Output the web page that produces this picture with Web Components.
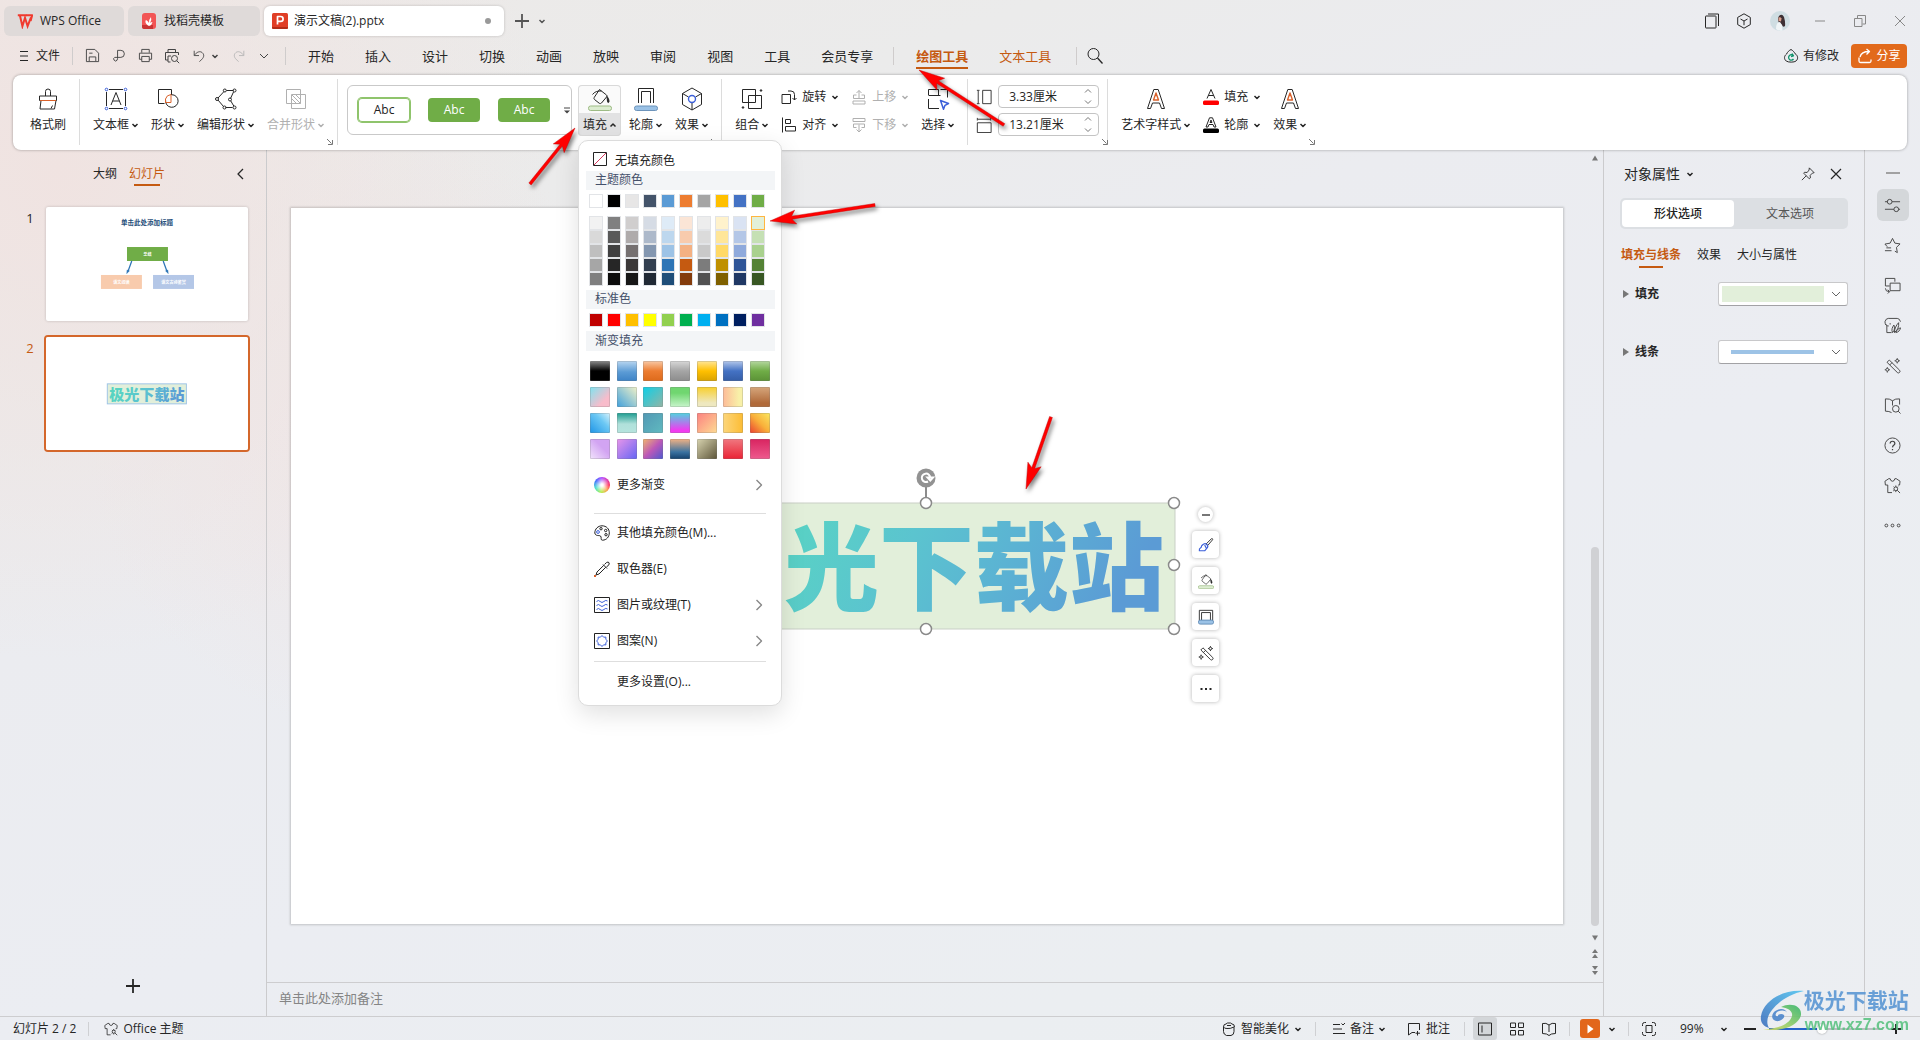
<!DOCTYPE html>
<html lang="zh-CN">
<head>
<meta charset="utf-8">
<title>演示文稿(2).pptx - WPS Office</title>
<style>
  html, body { margin: 0; height: 100%; }
  body {
    font: 12px/16px "Open Sans", "Noto Sans CJK SC", sans-serif;
    color: #262626;
    overflow: hidden;
    background:
      radial-gradient(circle at 3% 16%, #f0e3e1 0, rgba(240,227,225,0) 24%),
      radial-gradient(circle at 20% 42%, #efe6e6 0, rgba(239,230,230,0) 18%),
      linear-gradient(160deg, #ece9e7 0%, #ebebeb 22%, #ebecf0 38%, #ebedf2 60%, #ebeef1 80%, #eceef2 100%);
  }
</style>
</head>
<body>
<wps-app></wps-app>

<script>
const BASE = `
  *, *::before, *::after { box-sizing: border-box; }
  button { font: inherit; color: inherit; background: none; border: 0; margin: 0; padding: 0; display: flex; align-items: center; justify-content: center; }
  a { color: inherit; text-decoration: none; }
  select, input { font: inherit; color: inherit; margin: 0; border-radius: 0; }
  :host([hidden]) { display: none; }
`;
const define = (tag, css, html) => customElements.define(tag, class extends HTMLElement {
  connectedCallback() {
    if (this.shadowRoot) return;
    const t = document.createElement('template');
    t.innerHTML = `<style>${BASE}${css}</style>${typeof html === 'function' ? html(this) : html}`;
    this.attachShadow({ mode: 'open' }).append(t.content.cloneNode(true));
  }
});

/* ---------- icons: [viewBox size, markup] ---------- */
const B = '#3b5fd9', O = '#d9622b';
const ICONS = {
  chev: [8, '<path d="M1.5 3l2.5 2.5L6.5 3" stroke-width="1.5"/>'],
  chevup: [8, '<path d="M1.5 5.5L4 3l2.5 2.5" stroke-width="1.5"/>'],
  spinup: [10, '<path d="M2 6.500l3-3 3 3"/>'],
  spindown: [10, '<path d="M2 3.500l3 3 3-3"/>'],
  chevthin: [12, '<path d="M2 4l4 4 4-4"/>'],
  right: [14, '<path d="M4.5 2l5 5-5 5" stroke="#888" stroke-width="1.4"/>'],
  left: [14, '<path d="M9 2L4 7l5 5" stroke-width="1.3"/>'],
  launch: [8, '<path d="M1 1l4.5 4.5M2 6.5h4.5V2" stroke="#777"/>'],
  more: [10, '<path d="M2 3h6" /><path d="M2 5.5h6L5 8.5z" fill="currentColor" stroke="none"/>'],
  wps: [16, '<path d="M.8 2.2h8.6M3 2.8l2.4 10.4L8 4.8l2.6 8.4L14 4.4" stroke="#f03a2e" stroke-width="2" stroke-linejoin="miter"/><path d="M9 2.2h6.2L13.6 8" stroke="#f03a2e" stroke-width="2"/>'],
  docer: [16, '<rect x="1" y="0" width="14" height="16" rx="3" fill="#f25555" stroke="none"/><path d="M1 12h11v4H3q-2 0-2-2z" fill="#c93434" stroke="none"/><path d="M8 13C4 11 4 8 5 7q2 1 3 3 0-4 2-6 1 3-1 6 1-1 2.500-1-.5 3-3.500 4z" fill="#fff" stroke="none"/>'],
  ppt: [16, '<rect width="16" height="16" rx="1.500" fill="#e03e26" stroke="none"/><path d="M0 14h16v.5q0 1.500-1.500 1.500h-13Q0 16 0 14.500z" fill="#b32d18" stroke="none"/><path d="M5.500 11.500V3.500h3.200a2.300 2.300 0 0 1 0 4.800H5.500" stroke="#fff" stroke-width="1.700"/>'],
  plus: [16, '<path d="M8 1v14M1 8h14" stroke-width="1.800"/>'],
  windows: [16, '<rect x="1.500" y="3" width="10.500" height="12" rx=".5"/><path d="M4 1h10.500v12"/>'],
  cube: [16, '<path d="M8 .8l6.300 3.600v7.200L8 15.200l-6.300-3.600V4.400zM4.500 6L8 8l3.500-2M8 8v4.200"/>'],
  avatar: [20, '<circle cx="10" cy="10" r="10" fill="#cfdde2" stroke="none"/><path d="M9 5q3-3 5 1 1.500 5 1 9-2 2-3-1L9 12Q7 8 9 5z" fill="#3d3034" stroke="none"/><path d="M8.500 6.500q2-1 3 1l-.5 3-2.500-.5z" fill="#dba28f" stroke="none"/><path d="M6 18q0-7 4-7l2 3 .5 5.500q-4 1-6.500-1.500z" fill="#f0f5f7" stroke="none"/>'],
  wmin: [14, '<path d="M2 7h10" stroke="#888"/>'],
  wrestore: [14, '<rect x="1.500" y="4.500" width="7.500" height="8" stroke="#888"/><path d="M4.500 4V1.500h8V10H9.500" stroke="#888"/>'],
  wclose: [14, '<path d="M2 2l10 10M12 2L2 12" stroke="#888"/>'],
  menu: [12, '<path d="M2 1.500h8M2 6h8M2 10.500h8"/>'],
  save: [16, '<path d="M1.500 1.500h9l4 4v9h-13zM4.500 14V9.500h7V14M4.500 5.500H8"/>'],
  pdf: [16, '<path d="M7 11V2.500h3.500a3.700 3.700 0 0 1 0 7.500H4a2 2 0 1 0 2.500 3L7 11"/>'],
  print: [16, '<path d="M4 5V1.500h8V5M4 12H1.500V5.500h13V12H12M4 9h8v5.500H4z"/>'],
  preview: [16, '<path d="M4 4.500v-3h7.500v3M4 12H1.500V4.500h13V7M6.500 14H4V8h3"/><circle cx="10.500" cy="10.500" r="3"/><path d="M12.800 12.800l2.400 2.400"/>'],
  undo: [16, '<path d="M2.500 2v5.500H8M2.800 7.200C5 3.500 9 2 11.500 4c3 2.500 2 5.500 0 7.500l-3 3"/>'],
  redo: [16, '<path d="M13.500 2v5.500H8M13.200 7.200C11 3.500 7 2 4.500 4c-3 2.500-2 5.500 0 7.500l3 3" stroke="#b5b5b5"/>'],
  search: [18, '<circle cx="7.500" cy="7" r="5.500"/><path d="M11.500 11l5 5.500" stroke-width="1.300"/>'],
  cloud: [16, '<path d="M8 1.500c2 1 3.500 3 4.200 4.300C15 7.500 15.500 11 13 13c-1.500 1.500-8 1.500-9.800 0C.8 11 1 8 3.600 6 4.500 4 6 2.500 8 1.500z"/><path d="M10.500 7.800A2.700 2.700 0 1 0 10.500 11M9 5.500l1.500 2.300-2.500.7" stroke="#11936b" stroke-width="1.300"/>'],
  share: [16, '<path d="M2 9.500v3.500q0 1.500 1.500 1.500h9q1.500 0 1.500-1.500v-1.500M3 9c1-4 4-5.500 9-5.500M9.500 1L12.500 3.500 9.500 6.500" stroke-width="1.300"/>'],
  brushbig: [24, '<path d="M9.500 9V4.500a2.500 2.500 0 0 1 5 0V9M3.500 9h17v4.500h-17zM5 13.500L4 22h14.500l1.500-8.500M15 21.500l1.500-3"/><path d="M4 13.500h16" stroke="'+O+'"/>'],
  textbox: [24, '<path d="M5 2.500h14M5 21.500h14M2.500 5v14M21.500 5v14M7 18l5-12.500L17 18M8.700 14h6.600"/><g stroke="'+B+'"><circle cx="2.500" cy="2.500" r="1.300"/><circle cx="21.500" cy="2.500" r="1.300"/><circle cx="2.500" cy="21.500" r="1.300"/><circle cx="21.500" cy="21.500" r="1.300"/></g>'],
  shapes: [24, '<path d="M8.500 16.500H2.500V2.500h13V8"/><path d="M9.600 13a6.300 6.300 0 1 0 6-5.300"/><path d="M9.500 15.500V12q1-4 5.500-4.500v8z" stroke="'+O+'"/>'],
  editshape: [24, '<path d="M12.500 3.500h7M19.500 5l-3 6.500M16.800 14l3 5M18.500 20.500h-7M9.500 19.500L4 13M4 11l6-6.500"/><circle cx="10.800" cy="3.500" r="1.500"/><circle cx="20.500" cy="3.500" r="1.500"/><circle cx="3" cy="12" r="1.500"/><circle cx="16" cy="12.500" r="1.500"/><circle cx="20.500" cy="20.500" r="1.500"/><circle cx="10.500" cy="20.500" r="1.500"/>'],
  merge: [24, '<rect x="2.500" y="2.500" width="14" height="14"/><rect x="7.500" y="7.500" width="14" height="14"/><path d="M8 8l8.500 8.500M8 12l4.500 4.500M12 8l4.500 4.500"/>'],
  bucket: [24, '<path d="M11.500 2.500l7 5.500q1 .8.200 1.800L13.500 16q-1 1-2.200.3L6.500 12.500q-1-1-.2-2.200zM4.500 7.500q3-4 9-3.500"/><path d="M19 9.500c1.200 1.500 2 3 2 5 0 1.300-1.500 1.300-1.500 0z" fill="currentColor"/><rect x=".5" y="19" width="23" height="4.500" rx="2" fill="#dcecd0" stroke="#9dbb85"/>'],
  outline: [24, '<path d="M4.500 16V1.500h15V16M7.500 16V4.500h9V16"/><rect x=".5" y="19" width="23" height="4.500" rx="2" fill="#9bc2e6" stroke="#6d94bb"/>'],
  effect: [24, '<path d="M12 1l9.500 5.500v11L12 23l-9.500-5.500v-11zM2.500 6.500l6 3.500M21.500 6.500l-6 3.500M12 16v7"/><circle cx="12" cy="12" r="3.500" stroke="'+B+'" stroke-width="1.400"/>'],
  group: [24, '<path d="M2.500 2.500h13v13h-13zM8.500 8.500h13v13h-13z"/><circle cx="21" cy="3.500" r=".8" fill="currentColor"/><circle cx="3" cy="20.500" r=".8" fill="currentColor"/>'],
  rotate: [16, '<path d="M1 5.500h8.500v9H1zM7 2h3q3.500 0 3.500 3.500V11M11.500 9l2 2 2-2"/>'],
  align: [16, '<path d="M1.500 .5v15M4.500 2.500h5v4h-5zM4.500 9.500h10v4.500h-10z"/>'],
  up: [16, '<path d="M8 9V1.500M5.500 4L8 1.500 10.500 4M5.500 6H2.500v3.500h11V6h-3M2 12h12v3H2z"/>'],
  down: [16, '<path d="M2 1.500h12v3H2zM5.500 10.500H2.500V7h11v3.500h-3M8 7.500V15M5.500 12.500L8 15l2.500-2.500"/>'],
  select: [24, '<path d="M2.500 8V2.500h10v6M14.500 2.500h7v8M2.500 8.500h12M2.500 12v9.500H13"/><path d="M14.500 13.500l8 3-3.500 1.800-1.500 4z" stroke="'+B+'" stroke-width="1.500"/>'],
  height: [18, '<path d="M2.500 2v14M1 1.500h3M1 16.500h3M7.500 1.500h9.500v15H7.500z"/>'],
  width: [18, '<path d="M2 2.500h14M1.500 1v3M16.500 1v3M1.500 6.500h15.500v11H1.500z"/>'],
  art: [24, '<path d="M3.500 21.500L9.800 2.500h4.400l6.300 19h-3L15.500 16h-7l-2 5.500z"/><path d="M9.500 13L12 6l2.500 7z" stroke="'+O+'" stroke-width="1.400"/>'],
  artfill: [16, '<path d="M4 9.500L8 .5l4 9M5.300 6.500h5.400"/><rect x="0" y="11.500" width="16" height="4.500" rx="1.500" fill="#f00" stroke="none"/>'],
  artline: [16, '<path d="M3 10L6.500 .8h3L13 10h-2l-1-2.500H6L5 10zM7 5.500l1-2.500 1 2.500z"/><rect x="0" y="11.500" width="16" height="4.500" rx="1.500" fill="#000" stroke="none"/>'],
  pin: [16, '<path d="M9.500 1l5.500 5.500-2 .5-2.500 2.500.2 3L9.500 13.500 3 7l1-1 3 .3L9.200 3.500zM6 10l-5 5"/>'],
  close: [14, '<path d="M2 2l10 10M12 2L2 12" stroke-width="1.200"/>'],
  dash: [16, '<path d="M1 8h14" stroke="#999" stroke-width="1.800"/>'],
  sliders: [18, '<path d="M1 5h3M8.500 5H17M1 13h9.500M15.500 13H17"/><circle cx="6" cy="5" r="2.500"/><circle cx="13" cy="13" r="2.500"/>'],
  star: [18, '<path d="M3.500 10.300L1 7.500l5.500-1L9 1.500l2.500 5 5.500.8-3.800 3.700.9 5.500-2.600-1.500M2.500 11.500h5M1 14.500h7"/>'],
  swap: [18, '<path d="M6 9.500H1.500v-8h10V5M6.500 6.500h10.500v8H6.500zM1.500 12q0 3.500 4 3.500M4 13.500l2 2-2 2"/>'],
  leaf: [18, '<path d="M3 9v7.500h5M2.500 8.500Q1 7.500 1 5q1-3.500 3.500-3.500h9.500q2.500 0 3.500 3.500M6.500 8v-1.500M5 9.500c-1.500 0-3-.5-3.500-2"/><path d="M9 16.500c-1.500-3 0-6 1.500-8 1 3 1 5.500-1.500 8zM11 16.500c0-4 2-8 4.500-10.500.5 4-1 8-4.500 10.500zM12.500 16.500c1-3 3-4.500 5-5-.5 2.500-2 4.500-5 5z"/>'],
  wand: [18, '<path d="M3.200 5.600L5.600 3.200 16.500 14a1.700 1.700 0 0 1-2.400 2.400L3.200 5.600zM6 8.500L8.500 6"/><circle cx="14" cy="4" r="1.500"/><circle cx="3.500" cy="13.500" r="1.500"/><path d="M14 1.200v1.300M16.800 4h-1.300M14 6.800V5.500M3.500 16.500v-1.500M.8 13.500H2M3.500 10.800V12M12.500 4h-1.300M5 13.500h1.300"/>'],
  book: [18, '<path d="M9 4Q6 1.500 1.500 2v13q4 0 6.500 1.500M9 4q3-2.500 7.500-2V8M9 4v5"/><circle cx="12.500" cy="12.500" r="3.500"/><path d="M15 15l2.500 2.500"/>'],
  help: [18, '<circle cx="9" cy="9" r="8"/><path d="M6.500 7q0-2.500 2.500-2.500T11.500 7q0 1-1.200 1.800T9 11M9 12.800v1.200" stroke-width="1.300"/>'],
  shirt: [18, '<path d="M8.500 16.500H4V8.500H1.500L1 4.500 5 1.800h1.500q.5 2.700 2.500 2.700t2.500-2.700H13l4 2.700-.5 4H15"/><circle cx="12.500" cy="12.500" r="2"/><path d="M12.500 9v1.500M10.200 10.200l1 1M14.800 10.200l-1 1M9.800 14.800l1.200-1M14 14l3 3M12.500 14.500V16"/>'],
  dots3: [18, '<circle cx="2.500" cy="9" r="1.500"/><circle cx="9" cy="9" r="1.500"/><circle cx="15.500" cy="9" r="1.500"/>'],
  dots: [16, '<g fill="currentColor" stroke="none"><rect x="2.500" y="7" width="2" height="2"/><rect x="7" y="7" width="2" height="2"/><rect x="11.500" y="7" width="2" height="2"/></g>'],
  nofill: [14, '<rect x=".5" y=".5" width="13" height="13"/><path d="M1 13L13 1" stroke="#d8365d"/>'],
  palette: [16, '<path d="M8 .8c4.500 0 7.300 3.200 7.300 7 0 4-2.800 7.400-6.800 7.400-2.500 0-.5-3-2-4.200-1.500-1-5 .5-5.700-3C.8 4 4 .8 8 .8z"/><circle cx="4" cy="7" r="1.400" stroke="'+B+'"/><circle cx="7" cy="3.700" r="1.200"/><circle cx="11.700" cy="5.500" r="1.200"/><circle cx="12" cy="9.700" r="1.200"/>'],
  picker: [16, '<path d="M9 3.500l4 4M9.800 4.300L3 11l-1 3 3-1 6.800-6.800M10.500 3.500q2-2.500 3.500-2.500 1.500.5 1.200 2-.7 2-2.700 2.800"/><rect x="0" y="14" width="2" height="2" fill="'+O+'" stroke="none"/>'],
  texture: [16, '<rect x=".5" y=".5" width="15" height="15"/><path d="M2.500 4.500q2-2 3.700 0t3.700 0 3.600-.5M2.500 8.500q2-2 3.700 0t3.700 0 3.600-.5M2.500 12.500q2-2 3.700 0t3.700 0 3.600-.5" stroke="'+B+'"/>'],
  pattern: [16, '<rect x=".5" y=".5" width="15" height="15"/><path d="M8 2.500l1.600 1.700 2.300-.1-.1 2.300L13.500 8l-1.700 1.600.1 2.300-2.300-.1L8 13.500l-1.600-1.700-2.300.1.1-2.300L2.500 8l1.700-1.600-.1-2.300 2.300.1z" stroke="'+B+'"/>'],
  brush: [18, '<path d="M9 8L15 2q1.500-.8 1.500 1L11 9.500z"/><path d="M5 9q2.500-2.500 4.500-1 2.500 2 1 4l-3 3.500H1.500Q1 13 3 12q1-.5 1-2zM7.500 9l2 4" stroke="'+B+'" stroke-width="1.300"/>'],
  frame: [18, '<path d="M1.500 13V1.500h15V13M4 13V4h10v9"/><rect x=".5" y="12.500" width="17" height="4.500" rx="2" fill="#9bc2e6" stroke="#5d88b3"/>'],
  beauty: [14, '<path d="M1.500 5v4.500q0 3 3 4h4.500q3-.5 3-4V5q-4 2-7 1.500Q2 6.500 1.500 5q0-3 2.500-3l1.500-1h3l1.500 1q2.500 0 2.500 3M5 3.500h4"/>'],
  note: [14, '<path d="M1 2.500h7M9.500 1.500l1.500 1.500L13 1M1 7h9M1 11.500h12"/>'],
  comment: [14, '<path d="M8 10.500H5L1.500 13V1.500h11V8M10.500 9v4.500M8.500 11.200h4.500"/>'],
  normal: [16, '<rect x="1.500" y="2" width="13" height="12"/><path d="M5 4.500v7"/>'],
  grid: [16, '<path d="M1.500 2h5v4.500h-5zM9.500 2h5v4.500h-5zM1.500 9.500h5V14h-5zM9.500 9.500h5V14h-5z"/>'],
  read: [16, '<path d="M8 4Q5 1.500 1.500 2.500v10l4 .5L8 14.500l2.500-1.500 4-.5v-10Q11 1.500 8 4v7"/>'],
  play: [16, '<path d="M5.500 3.500l6 4.500-6 4.500z" fill="#fff" stroke="none"/>'],
  fit: [16, '<path d="M1.500 5V3.500q0-2 2-2H5M11 1.500h1.500q2 0 2 2V5M14.500 11v1.500q0 2-2 2H11M5 14.500H3.500q-2 0-2-2V11M5 4.500h6v7H5z"/>'],
  minus: [14, '<path d="M1 7h12" stroke="#222" stroke-width="2"/>'],
  plusbold: [14, '<path d="M7 2v10M2 7h10" stroke="#222" stroke-width="2"/>'],
  bar: [12, '<path d="M2 6h8" stroke="#777" stroke-width="2"/>'],
};
define('wps-icon', `
  :host { display: inline-flex; flex: none; }
  svg { display: block; }
`, el => {
  const [n, m] = ICONS[el.getAttribute('name')];
  const s = el.getAttribute('size') || n;
  return `<svg width="${s}" height="${s}" viewBox="0 0 ${n} ${n}" fill="none" stroke="currentColor" stroke-linejoin="round" aria-hidden="true">${m}</svg>`;
});

/* ---------- title bar ---------- */
define('title-tab', `
  :host { display: block; height: 30px; }
  button { width: 100%; height: 30px; padding: 0 13px; gap: 7px; justify-content: flex-start; border-radius: 6px; background: #dfdad9; }
  :host([active]) button { background: #fff; box-shadow: 0 0 3px rgba(0,0,0,.2); padding: 0 8px; gap: 6px; }
  .dot { margin-left: auto; margin-right: 5px; width: 6px; height: 6px; border-radius: 3px; background: #999; }
`, el => `<button role="tab"><wps-icon name="${el.getAttribute('icon')}"></wps-icon><slot></slot>${el.hasAttribute('active') ? '<span class="dot"></span>' : ''}</button>`);

define('title-bar', `
  :host { display: flex; box-sizing: border-box; align-items: center; height: 40px; padding: 2px 0 0 4px; gap: 4px; }
  .add { margin-left: 6px; gap: 8px; display: flex; color: #555; }
  .win { margin-left: auto; display: flex; align-items: center; }
  .win button { width: 40px; height: 32px; }
  .win .tight { width: 32px; }
`, `
  <title-tab icon="wps" style="width:120px">WPS Office</title-tab>
  <title-tab icon="docer" style="width:132px">找稻壳模板</title-tab>
  <title-tab icon="ppt" style="width:240px" active>演示文稿(2).pptx</title-tab>
  <div class="add"><button aria-label="新建"><wps-icon name="plus"></wps-icon></button><button aria-label="标签列表"><wps-icon name="chev"></wps-icon></button></div>
  <div class="win">
    <button class="tight" aria-label="工作区"><wps-icon name="windows"></wps-icon></button>
    <button class="tight" aria-label="应用"><wps-icon name="cube"></wps-icon></button>
    <button aria-label="账号"><wps-icon name="avatar"></wps-icon></button>
    <button aria-label="最小化"><wps-icon name="wmin"></wps-icon></button>
    <button aria-label="还原"><wps-icon name="wrestore"></wps-icon></button>
    <button aria-label="关闭"><wps-icon name="wclose"></wps-icon></button>
  </div>
`);

/* ---------- menu row ---------- */
define('menu-tab', `
  :host { display: block; font-size: 13px; }
  button { height: 26px; line-height: 20px; border-bottom: 2px solid transparent; padding-top: 2px; white-space: nowrap; }
  :host([accent]) button { color: #c55a11; }
  :host([active]) button { border-bottom: 2px solid #c55a11; font-weight: 700; }
`, `<button role="tab"><slot></slot></button>`);

define('menu-bar', `
  :host { display: flex; box-sizing: border-box; align-items: center; height: 35px; padding: 0 13px 4px 18px; }
  .file { gap: 6px; height: 24px; }
  i { width: 1px; height: 18px; background: #cfcccc; }
  .quick { display: flex; align-items: center; padding: 0 15px 0 12px; color: #444; }
  .quick button { height: 24px; }
  .tabs { display: flex; align-items: center; gap: 31px; padding: 0 20px 0 22px; }
  .right { margin-left: auto; display: flex; align-items: center; gap: 12px; }
  .state { gap: 4px; height: 24px; }
  .share { width: 56px; height: 24px; gap: 3px; border-radius: 4px; background: #e26a1b; color: #fff; }
  .find { margin-left: 9px; }
`, `
  <button class="file"><wps-icon name="menu"></wps-icon>文件</button><i style="margin-left:12px"></i>
  <div class="quick">
    <button aria-label="保存" style="width:15px"><wps-icon name="save" size="15"></wps-icon></button>
    <button aria-label="输出为PDF" style="width:15px;margin-left:11px"><wps-icon name="pdf" size="15"></wps-icon></button>
    <button aria-label="打印" style="width:16px;margin-left:11px"><wps-icon name="print" size="15"></wps-icon></button>
    <button aria-label="打印预览" style="width:16px;margin-left:11px"><wps-icon name="preview"></wps-icon></button>
    <button aria-label="撤销" style="width:14px;margin-left:12px"><wps-icon name="undo" size="14"></wps-icon></button>
    <button aria-label="撤销列表" style="margin-left:5px"><wps-icon name="chev"></wps-icon></button>
    <button aria-label="恢复" style="width:14px;margin-left:13px"><wps-icon name="redo" size="14"></wps-icon></button>
    <button aria-label="自定义" style="margin-left:12px"><wps-icon name="chevthin"></wps-icon></button>
  </div><i></i>
  <nav class="tabs" role="tablist">
    <menu-tab>开始</menu-tab><menu-tab>插入</menu-tab><menu-tab>设计</menu-tab><menu-tab>切换</menu-tab><menu-tab>动画</menu-tab><menu-tab>放映</menu-tab><menu-tab>审阅</menu-tab><menu-tab>视图</menu-tab><menu-tab>工具</menu-tab><menu-tab>会员专享</menu-tab>
  </nav><i></i>
  <nav class="tabs" role="tablist" style="padding-right:25px"><menu-tab accent active>绘图工具</menu-tab><menu-tab accent>文本工具</menu-tab></nav><i></i>
  <button class="find" aria-label="搜索"><wps-icon name="search"></wps-icon></button>
  <div class="right">
    <button class="state"><wps-icon name="cloud"></wps-icon>有修改</button>
    <button class="share"><wps-icon name="share"></wps-icon>分享</button>
  </div>
`);

/* ---------- ribbon ---------- */
define('tool-button', `
  :host { display: block; position: relative; }
  button { flex-direction: column; height: 51px; white-space: nowrap; }
  .pic { height: 28px; display: flex; align-items: center; }
  .txt { display: flex; align-items: center; gap: 2px; height: 23px; }
  wps-icon[name^="chev"] { margin-right: -1px; }
  :host([row]) button { flex-direction: row; height: 23px; gap: 5px; }
  :host([row]) .pic { height: 23px; }
  :host([row]) .txt { gap: 5px; }
  :host([off]) { color: #b0b0b0; }
  :host([open]) { margin: 0 -5px; }
  :host([open]) button { padding: 0 5px; border-radius: 4px; box-shadow: inset 0 0 0 1px #d9d9d9; background: linear-gradient(#fafafa 28px, #e2e2e3 28px); }
`, el => `<button${el.hasAttribute('off') ? ' disabled style="color:inherit"' : ''}><span class="pic"><wps-icon name="${el.getAttribute('icon')}"></wps-icon></span><span class="txt"><slot></slot>${el.hasAttribute('menu') ? `<wps-icon name="${el.hasAttribute('open') ? 'chevup' : 'chev'}"></wps-icon>` : ''}</span></button><slot name="popup"></slot>`);

define('tool-group', `
  :host { display: flex; gap: 13px; padding: 0 13px; border-right: 1px solid #dcdcdc; height: 66px; padding-top: 6px; align-items: flex-start; }
  :host([last]) { border-right: 0; }
  .launch { align-self: flex-end; margin: 0 -10px -1px -11px; }
`, el => `<slot></slot>${el.hasAttribute('launch') ? '<button class="launch" aria-label="更多选项"><wps-icon name="launch"></wps-icon></button>' : ''}`);

define('style-gallery', `
  :host { display: flex; align-items: center; gap: 18px; width: 225px; height: 50px; padding: 0 1px 0 10px; border: 1px solid #c9c9c9; border-radius: 6px; margin: 0 -2px 0 -4px; }
  button { width: 52px; height: 24px; border-radius: 4px; background: #70ad47; color: #fff; flex: none; }
  .plain { background: #fff; color: #222; box-shadow: 0 0 0 1px #8fc46c, inset 0 0 0 1px #8fc46c; }
  .more { width: 10px; background: none; color: #444; margin-left: -6px; }
`, `<button class="plain">Abc</button><button>Abc</button><button>Abc</button><button class="more" aria-label="更多样式"><wps-icon name="more"></wps-icon></button>`);

define('size-field', `
  :host { display: flex; align-items: center; gap: 6px; height: 23px; }
  label { display: flex; width: 16px; }
  .box { display: flex; width: 101px; height: 23px; border: 1px solid #c4c4c4; border-radius: 4px; background: #fff; }
  input { border: 0; outline: 0; background: none; width: 80px; padding: 0 0 0 10px; }
  .spin { display: flex; flex-direction: column; justify-content: space-between; width: 18px; }
  .spin button { height: 10px; width: 18px; color: #777; }
`, el => `<label for="v"><wps-icon name="${el.getAttribute('icon')}" size="16"></wps-icon></label><span class="box"><input id="v" aria-label="${el.getAttribute('label')}" value="${el.getAttribute('value')}"><span class="spin"><button aria-label="增加"><wps-icon name="spinup"></wps-icon></button><button aria-label="减少"><wps-icon name="spindown"></wps-icon></button></span></span>`);

define('ribbon-bar', `
  :host { display: flex; align-items: flex-start; box-sizing: border-box; height: 75px; margin: 0 13px; padding: 4px; border-radius: 8px; background: #fff; box-shadow: 0 0 3px rgba(0,0,0,.35); }
  .stack { display: flex; flex-direction: column; gap: 5px; }
`, `
  <tool-group><tool-button icon="brushbig">格式刷</tool-button></tool-group>
  <tool-group launch>
    <tool-button icon="textbox" menu>文本框</tool-button>
    <tool-button icon="shapes" menu>形状</tool-button>
    <tool-button icon="editshape" menu>编辑形状</tool-button>
    <tool-button icon="merge" menu off>合并形状</tool-button>
  </tool-group>
  <tool-group launch>
    <style-gallery></style-gallery>
    <tool-button icon="bucket" menu open>填充<fill-menu slot="popup"></fill-menu></tool-button>
    <tool-button icon="outline" menu>轮廓</tool-button>
    <tool-button icon="effect" menu>效果</tool-button>
  </tool-group>
  <tool-group>
    <tool-button icon="group" menu>组合</tool-button>
    <div class="stack"><tool-button row icon="rotate" menu>旋转</tool-button><tool-button row icon="align" menu>对齐</tool-button></div>
    <div class="stack"><tool-button row icon="up" menu off>上移</tool-button><tool-button row icon="down" menu off>下移</tool-button></div>
    <tool-button icon="select" menu>选择</tool-button>
  </tool-group>
  <tool-group launch style="padding:6px 8px 0">
    <div class="stack"><size-field icon="height" label="高度" value="3.33厘米"></size-field><size-field icon="width" label="宽度" value="13.21厘米"></size-field></div>
  </tool-group>
  <tool-group launch last>
    <tool-button icon="art" menu>艺术字样式</tool-button>
    <div class="stack"><tool-button row icon="artfill" menu>填充</tool-button><tool-button row icon="artline" menu>轮廓</tool-button></div>
    <tool-button icon="art" menu>效果</tool-button>
  </tool-group>
`);

/* ---------- fill colour menu ---------- */
define('swatch-row', `
  :host { display: flex; gap: 4px; height: 14px; margin: 0 9px 0 3px; }
  button { width: 14px; height: 14px; border: 1px solid #e2e4e7; }
  button.on { border: 1px solid #ff9c00; outline: 1px solid #ffb640; outline-offset: -1px; }
`, el => el.getAttribute('colors').split(' ').map((c, i) => `<button aria-label="#${c}" class="${el.getAttribute('on') == i ? 'on' : ''}" style="background:#${c}"></button>`).join(''));

define('menu-row', `
  :host { display: block; height: 36px; margin: 0 8px; }
  button { width: 100%; height: 100%; justify-content: flex-start; gap: 7px; padding-right: 1px; }
  .gap { width: 16px; }
  .go { margin-left: auto; }
  .wheel { width: 16px; height: 16px; border-radius: 8px; background: radial-gradient(circle, #fff 10%, rgba(255,255,255,0) 65%), conic-gradient(#b44bff, #ff2e5c 25%, #ffa04d 37%, #b6f04a 52%, #46e0d0 68%, #3f6bff 85%, #b44bff); }
`, el => { const n = el.getAttribute('icon');
  return `<button role="menuitem">${n === 'wheel' ? '<span class="wheel"></span>' : n ? `<wps-icon name="${n}"></wps-icon>` : '<span class="gap"></span>'}<slot></slot>${el.hasAttribute('sub') ? '<wps-icon class="go" name="right"></wps-icon>' : ''}</button>`; });

const GRADS = [
  'linear-gradient(#8a8a8a,#000 50%)','linear-gradient(#b9d6f0,#5b9bd5 55%,#3d83c6)','linear-gradient(#f8c9a6,#ed7d31 50%,#dd6a1b)','linear-gradient(#d8d8d8,#a5a5a5 50%,#8c8c8c)','linear-gradient(#ffe699,#ffc000 50%,#d8a200)','linear-gradient(#b4c7ea,#4472c4 50%,#345da6)','linear-gradient(#b5d8a0,#70ad47 50%,#5b9236)',
  'linear-gradient(135deg,#7fe4f0,#f8bccb 70%)','linear-gradient(45deg,#3fa0dc,#f2f2c8)','linear-gradient(135deg,#0cd0e8,#94b4a4)','linear-gradient(#70d670 30%,#c8f5cc)','linear-gradient(#f8cf2c,#eee8c0 80%)','linear-gradient(90deg,#fdbb98,#f8f0a8 80%)','linear-gradient(#d6a67c,#b06a3a 80%)',
  'linear-gradient(45deg,#1e94e6,#6cc8f4 60%,#d8f2fc)','linear-gradient(#1c9c90,#b0e0da 55%,#b6e4de)','linear-gradient(135deg,#5298b4,#60bac0)','linear-gradient(#50d4e0,#f03cf0 85%)','linear-gradient(135deg,#fc8080,#fddc94)','linear-gradient(90deg,#fcd67c,#fcbc34)','linear-gradient(45deg,#ea4030,#f9b03a 50%,#fae862)',
  'linear-gradient(45deg,#f2e4fc,#d2a4f2 60%)','linear-gradient(135deg,#e896ea,#6464f4)','linear-gradient(135deg,#f2b66c,#bc58b8 50%,#4c58d0)','linear-gradient(#f2b284,#3a72a0 65%,#14406c)','linear-gradient(135deg,#d8d4b0,#5c5438)','linear-gradient(#f07880,#ea2234)','linear-gradient(#d82460,#ee5a8e)'
];
define('fill-menu', `
  :host { position: absolute; box-sizing: border-box; z-index: 5; top: 55px; left: 0; width: 204px; padding: 9px 6px 5px 7px; background: #fff; border: 1px solid #dcdcdc; border-radius: 10px; box-shadow: 0 8px 24px rgba(0,0,0,.12); color: #222; }
  .none { height: 21px; gap: 8px; padding-left: 7px; }
  .none wps-icon { align-self: flex-start; padding-top: 2px; }
  h4 { margin: 0; height: 19px; padding-left: 9px; background: #f3f5f7; color: #44506a; font: inherit; line-height: 18px; }
  .tall { height: 20px; line-height: 20px; }
  .pad { padding: 4px 0; }
  .shades { display: flex; flex-direction: column; padding-top: 8px; }
  .grads { display: grid; grid-template-columns: repeat(7, 20px); justify-content: space-between; gap: 6px 0; margin: 10px 5px 8px 4px; }
  .grads button { width: 20px; height: 20px; border-radius: 1px; box-shadow: inset 0 0 0 1px rgba(120,120,120,.25); }
  hr { height: 1px; border: 0; background: #dedede; margin: 0 9px 0 8px; }
`, `
  <button class="none"><wps-icon name="nofill"></wps-icon>无填充颜色</button>
  <h4>主题颜色</h4>
  <div class="pad">
    <swatch-row colors="ffffff 000000 e7e6e6 44546a 5b9bd5 ed7d31 a5a5a5 ffc000 4472c4 70ad47"></swatch-row>
    <div class="shades">
      <swatch-row on="9" colors="f2f2f2 808080 d0cece d6dce5 deebf7 fbe5d6 ededed fff2cc dae3f3 e2f0d9"></swatch-row>
      <swatch-row colors="d9d9d9 595959 afabab adb9ca bdd7ee f8cbad dbdbdb ffe699 b4c7e7 c5e0b4"></swatch-row>
      <swatch-row colors="bfbfbf 404040 767171 8497b0 9dc3e6 f4b183 c9c9c9 ffd966 8faadc a9d18e"></swatch-row>
      <swatch-row colors="a6a6a6 262626 3b3838 333f50 2e75b6 c55a11 7c7c7c bf9000 2f5597 548235"></swatch-row>
      <swatch-row colors="7f7f7f 0d0d0d 171717 222a35 1f4e79 843c0c 525252 7f6000 203864 385723"></swatch-row>
    </div>
  </div>
  <h4>标准色</h4>
  <div class="pad"><swatch-row colors="c00000 ff0000 ffc000 ffff00 92d050 00b050 00b0f0 0070c0 002060 7030a0"></swatch-row></div>
  <h4 class="tall">渐变填充</h4>
  <div class="grads">${GRADS.map((g, i) => `<button aria-label="渐变 ${i + 1}" style="background:${g}"></button>`).join('')}</div>
  <menu-row icon="wheel" sub>更多渐变</menu-row>
  <hr style="margin-top:10px;margin-bottom:1px">
  <menu-row icon="palette">其他填充颜色(M)...</menu-row>
  <menu-row icon="picker">取色器(E)</menu-row>
  <menu-row icon="texture" sub>图片或纹理(T)</menu-row>
  <menu-row icon="pattern" sub>图案(N)</menu-row>
  <hr style="margin-top:2px;margin-bottom:2px">
  <menu-row>更多设置(O)...</menu-row>
`);

/* ---------- slides ---------- */
const GRAD_DEF = `<defs><linearGradient id="g" x1="0" y1="0" x2="1" y2="0.15"><stop offset="0" stop-color="#55d6be"/><stop offset=".28" stop-color="#59d0c6"/><stop offset=".5" stop-color="#5bc4cf"/><stop offset=".72" stop-color="#5bb3d3"/><stop offset="1" stop-color="#5b9bd5"/></linearGradient></defs>`;
const word = (line, w) => `${GRAD_DEF}<rect x="386" y="295" width="498" height="126" fill="#e2efda" stroke="${line}" stroke-width="${w}"/><text x="398" y="395" font-size="95" font-weight="900" fill="url(#g)">极光下载站</text>`;
const FLOW = `
  <text x="636" y="112" font-size="41" font-weight="700" fill="#1f4e79" text-anchor="middle">单击此处添加标题</text>
  <rect x="510" y="252" width="258" height="88" fill="#70ad47"/>
  <rect x="346" y="428" width="258" height="88" fill="#f8cbad"/>
  <rect x="674" y="428" width="258" height="88" fill="#b4c7e7"/>
  <g font-size="26" font-weight="700" fill="#fff" text-anchor="middle"><text x="639" y="306">总结</text><text x="475" y="482">语文阅读</text><text x="803" y="482">语文古诗鉴赏</text></g>
  <g stroke="#2e75b6" stroke-width="8" fill="#2e75b6"><path d="M540 340l-24 66M738 340l24 66"/><path d="M508 420l2-24 16 6zM770 420l-2-24-16 6z" stroke-width="2"/></g>`;

define('slide-thumb', `
  :host { display: flex; gap: 10px; align-items: flex-start; }
  .no { width: 8px; text-align: center; font-size: 13px; padding-top: 5px; }
  button { flex: 1; display: block; border: 2px solid transparent; border-radius: 4px; padding: 0; }
  svg { display: block; width: 100%; background: #fff; border-radius: 2px; box-shadow: 0 0 3px rgba(0,0,0,.2); }
  :host([active]) .no { color: #c55a11; }
  :host([active]) button { border-color: #d4672b; }
  :host([active]) svg { box-shadow: none; }
`, el => `<span class="no">${el.getAttribute('no')}</span><button aria-label="幻灯片 ${el.getAttribute('no')}"><svg viewBox="0 0 1272 716">${el.getAttribute('art') === 'flow' ? FLOW : word('#9dc3e6', 6)}</svg></button>`);

define('slide-panel', `
  :host { display: flex; flex-direction: column; box-sizing: border-box; width: 267px; flex: none; border-right: 1px solid #cbcbcd; }
  .head { display: flex; align-items: flex-start; gap: 12px; padding: 12px 18px 0 93px; height: 55px; }
  .head button { height: 24px; padding-top: 0; position: relative; }
  .on { color: #c55a11; }
  .on::after { content: ""; position: absolute; left: 5px; right: 5px; bottom: 0; height: 2px; background: #c55a11; }
  .back { margin-left: auto; }
  .list { display: flex; flex-direction: column; gap: 12px; padding: 0 16px 0 26px; }
  .add { margin: auto auto 22px 125px; }
`, `
  <div class="head"><button role="tab">大纲</button><button role="tab" class="on">幻灯片</button><button class="back" aria-label="收起"><wps-icon name="left"></wps-icon></button></div>
  <div class="list"><slide-thumb no="1" art="flow"></slide-thumb><slide-thumb no="2" art="word" active></slide-thumb></div>
  <button class="add" aria-label="新建幻灯片"><wps-icon name="plus"></wps-icon></button>
`);

define('mini-bar', `
  :host { position: absolute; left: 901px; top: 299px; width: 27px; display: flex; flex-direction: column; align-items: center; gap: 9px; }
  button { width: 27px; height: 27px; border-radius: 4px; background: #fff; box-shadow: 0 0 4px rgba(0,0,0,.3); }
  .fold { width: 15px; height: 15px; border-radius: 8px; }
`, `<button class="fold" aria-label="折叠"><wps-icon name="bar"></wps-icon></button>
  <button aria-label="样式"><wps-icon name="brush" size="16"></wps-icon></button>
  <button aria-label="填充"><wps-icon name="bucket" size="16"></wps-icon></button>
  <button aria-label="轮廓"><wps-icon name="frame" size="16"></wps-icon></button>
  <button aria-label="智能"><wps-icon name="wand" size="16"></wps-icon></button>
  <button aria-label="更多"><wps-icon name="dots"></wps-icon></button>`);

define('scroll-rail', `
  :host { display: flex; flex-direction: column; align-items: center; box-sizing: border-box; width: 16px; padding: 4px 0 4px; color: #777; }
  .track { flex: 1; width: 8px; display: flex; flex-direction: column; }
  .track::before { content: ""; flex: 385; }
  .track::after { content: ""; flex: 4; }
  .thumb { flex: 379; border-radius: 4px; background: #d0d1d4; }
  button { width: 16px; height: 16px; }
  svg { fill: #777; display: block; }
`, `<button aria-label="向上滚动" style="height:8px"><svg width="8" height="8"><path d="M4 1.500l3 5H1z"/></svg></button>
  <div class="track"><div class="thumb"></div></div>
  <button aria-label="向下滚动"><svg width="8" height="8"><path d="M4 6.500l3-5H1z"/></svg></button>
  <button aria-label="上一张"><svg width="8" height="12"><path d="M4 1l3 4H1zM4 6l3 4H1z"/></svg></button>
  <button aria-label="下一张"><svg width="8" height="12"><path d="M4 11l3-4H1zM4 6l3-4H1z"/></svg></button>`);

const HANDLES = [[635, 295], [883, 295], [883, 357], [883, 421], [635, 421], [386, 295], [386, 357], [386, 421]];
define('slide-stage', `
  :host { display: flex; flex-direction: column; flex: 1; min-width: 0; border-right: 1px solid #cbcbcd; }
  .view { flex: 1; display: flex; min-height: 0; }
  .canvas { flex: 1; padding: 58px 24px 0; min-width: 0; }
  .slide { position: relative; background: #fff; box-shadow: 0 0 2px 1px rgba(0,0,0,.18); }
  .slide svg { display: block; width: 100%; overflow: visible; }
  .notes { height: 34px; border: 0; border-top: 1px solid #cdcdcf; padding: 5px 12px; margin: 0; font: 13px/20px "Open Sans", "Noto Sans CJK SC", sans-serif; background: none; resize: none; display: block; outline: 0; }
  .notes::placeholder { color: #858585; opacity: 1; }
`, `
  <div class="view">
    <div class="canvas"><div class="slide">
      <svg viewBox="0 0 1272 716">${word('#c9cfc6', 1)}
        <path d="M635 289v-12" stroke="#666" stroke-width="1.500"/>
        <circle cx="635" cy="270" r="9.500" fill="#929292"/>
        <path d="M637 273.500a4.200 4.200 0 1 1 2.200-3.500M636.500 269.500h5.500l-2.700 3z" fill="none" stroke="#fff" stroke-width="2"/>
        <g fill="#fff" stroke="#8a8a8a" stroke-width="1.500">${HANDLES.map(([x, y]) => `<circle cx="${x}" cy="${y}" r="5.500"/>`).join('')}</g>
      </svg>
      <mini-bar></mini-bar>
    </div></div>
    <scroll-rail></scroll-rail>
  </div>
  <textarea class="notes" aria-label="备注" placeholder="单击此处添加备注"></textarea>
`);

/* ---------- properties ---------- */
define('prop-row', `
  :host { display: flex; align-items: center; height: 24px; }
  label { display: flex; align-items: center; gap: 6px; font-weight: 700; }
  label svg { display: block; fill: #777; }
  .pick { margin-left: auto; position: relative; width: 130px; height: 24px; display: flex; }
  select { appearance: none; width: 100%; border: 1px solid #c8c8ca; border-bottom-color: #a2a2a5; border-radius: 3px; background: var(--mark) no-repeat, #fff; outline: 0; }
  :host([kind="fill"]) select { --mark: linear-gradient(#e2efda, #e2efda) 3px 3px / 102px 16px; }
  :host([kind="line"]) select { --mark: linear-gradient(#9dc3e6, #9dc3e6) 12px 9px / 83px 4px; }
  .pick wps-icon { position: absolute; right: 6px; top: 6px; pointer-events: none; color: #666; }
`, el => `<label for="s"><svg width="6" height="8"><path d="M0 0l6 4-6 4z"/></svg><slot></slot></label><span class="pick"><select id="s"><option></option></select><wps-icon name="chevthin"></wps-icon></span>`);

define('prop-panel', `
  :host { display: flex; flex-direction: column; box-sizing: border-box; width: 261px; flex: none; padding: 13px 16px 0; border-right: 1px solid #cbcbcd; }
  .title { display: flex; align-items: center; padding-left: 4px; height: 22px; font-size: 14px; }
  .title wps-icon { margin-left: 6px; }
  .title .pin { margin-left: auto; } .title .x { margin: 0 5px 0 14px; }
  .seg { display: flex; padding: 2px; margin-top: 13px; height: 31px; border-radius: 5px; background: #dcdfe3; color: #555; }
  .seg button { flex: 1; border-radius: 4px; }
  .seg .on { background: #fff; color: #222; font-weight: 500; }
  .tabs { display: flex; gap: 16px; padding-left: 1px; margin-top: 16px; }
  .tabs button { height: 23px; padding-bottom: 3px; position: relative; }
  .tabs .on { color: #c55a11; font-weight: 700; }
  .tabs .on::after { content: ""; position: absolute; left: 18px; right: 18px; bottom: 0; height: 2px; background: #c55a11; }
  .rows { display: flex; flex-direction: column; gap: 34px; padding-left: 3px; margin-top: 14px; }
`, `
  <div class="title"><button>对象属性<wps-icon name="chev"></wps-icon></button><button class="pin" aria-label="固定"><wps-icon name="pin" size="14"></wps-icon></button><button class="x" aria-label="关闭"><wps-icon name="close" style="margin:0"></wps-icon></button></div>
  <div class="seg"><button class="on">形状选项</button><button>文本选项</button></div>
  <div class="tabs"><button class="on">填充与线条</button><button>效果</button><button>大小与属性</button></div>
  <div class="rows"><prop-row kind="fill">填充</prop-row><prop-row kind="line">线条</prop-row></div>
`);

define('side-rail', `
  :host { display: flex; flex-direction: column; align-items: center; gap: 8px; box-sizing: border-box; width: 55px; flex: none; padding-top: 15px; color: #444; }
  button { width: 32px; height: 32px; border-radius: 6px; }
  .top { height: 16px; }
  .on { background: #d4d7da; }
`, `<button class="top" aria-label="收起"><wps-icon name="dash"></wps-icon></button>` +
  [['sliders', '对象属性'], ['star', '动画'], ['swap', '切换'], ['leaf', '素材'], ['wand', '美化'], ['book', '查找'], ['help', '帮助'], ['shirt', '主题'], ['dots3', '更多']]
  .map(([n, l], i) => `<button aria-label="${l}" class="${i ? '' : 'on'}"><wps-icon name="${n}" size="17"></wps-icon></button>`).join(''));

/* ---------- status bar ---------- */
define('status-bar', `
  :host { display: flex; align-items: center; box-sizing: border-box; height: 24px; border-top: 1px solid #cdcdcf; padding: 0 17px 0 13px; }
  i { width: 1px; height: 14px; background: #cfd0d3; }
  button { height: 23px; white-space: nowrap; }
  .right { margin-left: auto; display: flex; align-items: center; }
  .view { width: 24px; border-radius: 3px; margin-right: 8px; }
  .on { background: #d3d6d9; }
  .play { width: 20px; height: 19px; border-radius: 3px; background: #e2661b; margin: 0 8px 0 10px; }
  .zoom { position: relative; display: flex; align-items: center; width: 48px; }
  .zoom select { appearance: none; border: 0; background: none; outline: 0; padding: 0; width: 48px; height: 20px; }
  .zoom wps-icon { position: absolute; right: 0; pointer-events: none; }
  input { appearance: none; background: none; width: 114px; height: 16px; margin: 0 6px 0 12px; }
  input::-webkit-slider-runnable-track { height: 2px; background: linear-gradient(90deg, #2563c9 46%, #b9bcc0 46%); }
  input::-webkit-slider-thumb { appearance: none; width: 10px; height: 10px; margin-top: -4px; border-radius: 5px; background: #fff; box-shadow: 0 0 2px rgba(0,0,0,.4); }
`, `
  <span>幻灯片 2 / 2</span><i style="margin:0 15px 0 12px"></i>
  <button style="gap:5px"><wps-icon name="shirt" size="14"></wps-icon>Office 主题</button>
  <div class="right">
    <button style="gap:5px"><wps-icon name="beauty"></wps-icon>智能美化<wps-icon name="chev"></wps-icon></button><i style="margin:0 16px 0 13px"></i>
    <button style="gap:4px"><wps-icon name="note"></wps-icon>备注<wps-icon name="chev"></wps-icon></button>
    <button style="gap:5px;margin-left:21px"><wps-icon name="comment"></wps-icon>批注</button><i style="margin:0 8px 0 14px"></i>
    <button class="view on" aria-label="普通视图"><wps-icon name="normal"></wps-icon></button>
    <button class="view" aria-label="幻灯片浏览"><wps-icon name="grid"></wps-icon></button>
    <button class="view" aria-label="阅读视图"><wps-icon name="read"></wps-icon></button><i></i>
    <button class="play" aria-label="放映"><wps-icon name="play"></wps-icon></button><button aria-label="放映选项"><wps-icon name="chev"></wps-icon></button><i style="margin:0 12px"></i>
    <button aria-label="适应窗口"><wps-icon name="fit"></wps-icon></button>
    <span class="zoom" style="margin-left:23px"><select aria-label="缩放比例"><option>99%</option></select><wps-icon name="chev"></wps-icon></span>
    <button aria-label="缩小" style="margin-left:15px"><wps-icon name="minus"></wps-icon></button>
    <input type="range" aria-label="缩放" min="0" max="100" value="46">
    <button aria-label="放大"><wps-icon name="plusbold"></wps-icon></button>
  </div>
`);

/* ---------- layers over the window ---------- */
const arrow = (x1, y1, x2, y2) => {
  const len = Math.hypot(x2 - x1, y2 - y1), a = Math.atan2(y2 - y1, x2 - x1) * 180 / Math.PI;
  return `<path transform="translate(${x2} ${y2}) rotate(${a})" d="M0 0L-26 -7L-22 -1.500H${-len}V1.500H-22L-26 7z"/>`;
};
define('pointer-marks', `
  :host { position: absolute; inset: 0; pointer-events: none; z-index: 10; overflow: hidden; }
  svg { display: block; filter: drop-shadow(2px 3px 2px rgba(0,0,0,.5)); }
`, `<svg width="1920" height="1040" fill="#ff0000" stroke="#c00000" stroke-width=".4">${arrow(1004, 125, 919, 70)}${arrow(530, 184, 575, 128)}${arrow(875, 205, 770, 221)}${arrow(1051, 417, 1026, 489)}</svg>`);

define('site-mark', `
  :host { position: absolute; right: 11px; bottom: 5px; z-index: 9; display: flex; align-items: center; pointer-events: none; opacity: .9; }
  .t { display: flex; flex-direction: column; }
  b { font: 700 21px/26px "Noto Sans CJK SC", sans-serif; color: #5b97d4; padding-bottom: 3px; }
  span { font: 700 16px/20px "Liberation Sans", sans-serif; color: #5cc383; padding-left: 1px; }
`, `<svg width="44" height="42" viewBox="0 0 44 42"><defs>
    <linearGradient id="a" x1="0" y1="1" x2="1" y2="0"><stop offset="0" stop-color="#3f6fbd"/><stop offset="1" stop-color="#52c4f0"/></linearGradient>
    <linearGradient id="b" x1="0" y1="1" x2="1" y2="0"><stop offset="0" stop-color="#dfe064"/><stop offset="1" stop-color="#35b56b"/></linearGradient></defs>
    <path d="M44 1C24-1 4 10 1 26c-1 6 2 10 8 12-3-5-2-12 3-18C19 11 30 4 44 1z" fill="url(#a)"/>
    <path d="M21 17c10-5 21-1 20 8C39 35 22 43 3 39c15 0 27-5 29-13 1-5-4-8-11-9z" fill="url(#b)"/>
    <path d="M27 23c-1-5-9-5-13-1-4 5-1 10 5 9 4-1 6-4 5-6-2-2-6-1-6 1-3 1-3-2-1-4 3-2 9-2 10 1z" fill="#4d86cc"/></svg>
  <div class="t"><b>极光下载站</b><span>www.xz7.com</span></div>`);

define('wps-app', `
  :host { display: flex; flex-direction: column; height: 100vh; position: relative; }
  ribbon-bar { position: relative; z-index: 4; }
  main { flex: 1; display: flex; min-height: 0; }
`, `
  <title-bar></title-bar>
  <menu-bar></menu-bar>
  <ribbon-bar></ribbon-bar>
  <main><slide-panel></slide-panel><slide-stage></slide-stage><prop-panel></prop-panel><side-rail></side-rail></main>
  <status-bar></status-bar>
  <site-mark></site-mark>
  <pointer-marks></pointer-marks>
`);
</script>
</body>
</html>
